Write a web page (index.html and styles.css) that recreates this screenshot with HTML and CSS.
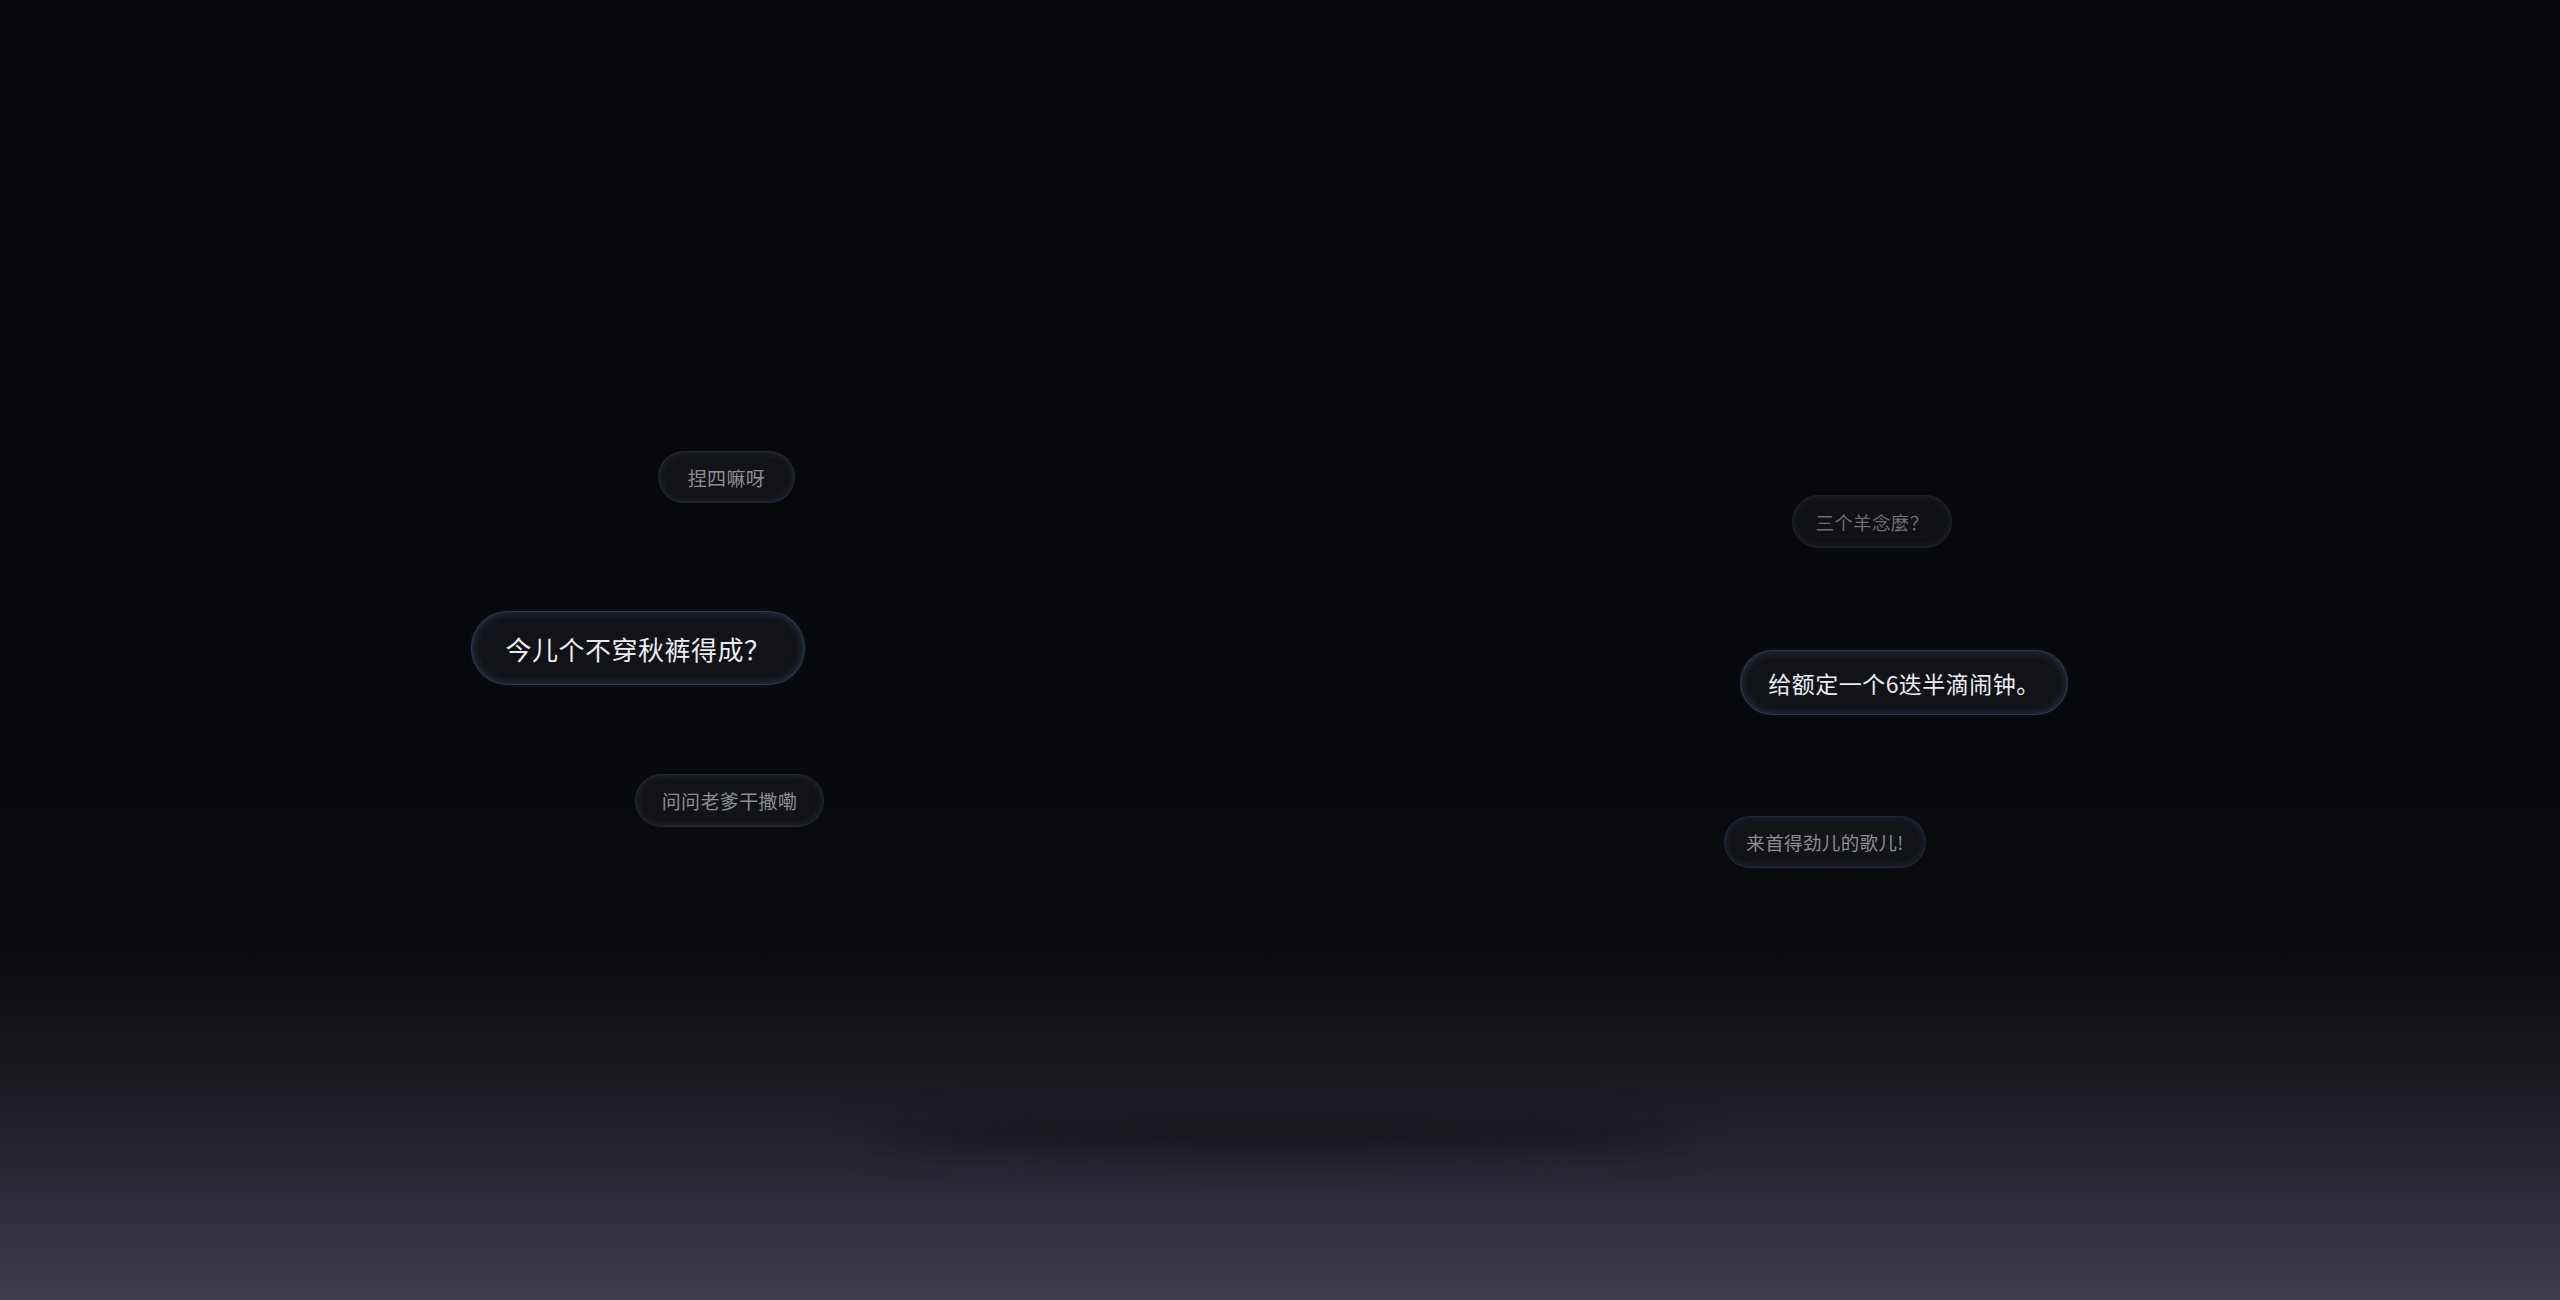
FILE: index.html
```html
<!DOCTYPE html>
<html lang="zh-CN">
<head>
<meta charset="utf-8">
<title>Bubbles</title>
<link rel="stylesheet" href="styles.css">
</head>
<body>
<main class="stage">
  <div class="bubble dim b1">捏四嘛呀</div>
  <div class="bubble bright b2">今儿个不穿秋裤得成？</div>
  <div class="bubble dim b3">问问老爹干撒嘞</div>
  <div class="bubble faint b4">三个羊念麼？</div>
  <div class="bubble bright b5">给额定一个6迭半滴闹钟。</div>
  <div class="bubble dim b6">来首得劲儿的歌儿!</div>
  <div class="floor-shadow"></div>
</main>
</body>
</html>
```
FILE: styles.css
```css
html, body {
  margin: 0;
  padding: 0;
}
body {
  width: 2560px;
  height: 1300px;
  overflow: hidden;
  font-family: "Noto Sans CJK SC", "Noto Sans", sans-serif;
}
.stage {
  position: relative;
  width: 2560px;
  height: 1300px;
  background: linear-gradient(to bottom,
    #06070a 0%,
    #08090c 55%,
    #0b0c10 73%,
    #111116 78%,
    #18181e 82%,
    #1f1f28 86%,
    #2c2c38 92%,
    #3e3c4e 100%);
}
.bubble {
  position: absolute;
  display: flex;
  align-items: center;
  justify-content: center;
  box-sizing: border-box;
  border-radius: 999px;
  background: #121317;
  white-space: nowrap;
  letter-spacing: 0.02em;
}
.bright {
  color: #ececf0;
  border: 1px solid rgba(70, 88, 125, 0.55);
  box-shadow: inset 0 0 8px rgba(70, 92, 135, 0.55), 0 0 4px rgba(40, 50, 70, 0.4);
}
.dim {
  color: #8d8d93;
  border: 1px solid rgba(45, 55, 75, 0.6);
  box-shadow: inset 0 0 7px rgba(45, 58, 85, 0.6);
}
.faint {
  color: #6c6c72;
  border: 1px solid rgba(38, 46, 62, 0.6);
  box-shadow: inset 0 0 7px rgba(40, 50, 72, 0.55);
  background: #101115;
}
.b1 { left: 658px; top: 451px; width: 137px; height: 52px; font-size: 19px; }
.b2 { left: 471px; top: 611px; width: 334px; height: 74px; font-size: 26px; }
.b3 { left: 635px; top: 774px; width: 189px; height: 53px; font-size: 19px; }
.b4 { left: 1792px; top: 495px; width: 160px; height: 53px; font-size: 18.5px; }
.b5 { left: 1740px; top: 650px; width: 328px; height: 65px; font-size: 23px; }
.b6 { left: 1724px; top: 816px; width: 202px; height: 52px; font-size: 18.5px; }
.floor-shadow {
  position: absolute;
  left: 860px;
  top: 1120px;
  width: 840px;
  height: 30px;
  border-radius: 50%;
  background: rgba(14, 14, 18, 0.7);
  filter: blur(16px);
}
```
